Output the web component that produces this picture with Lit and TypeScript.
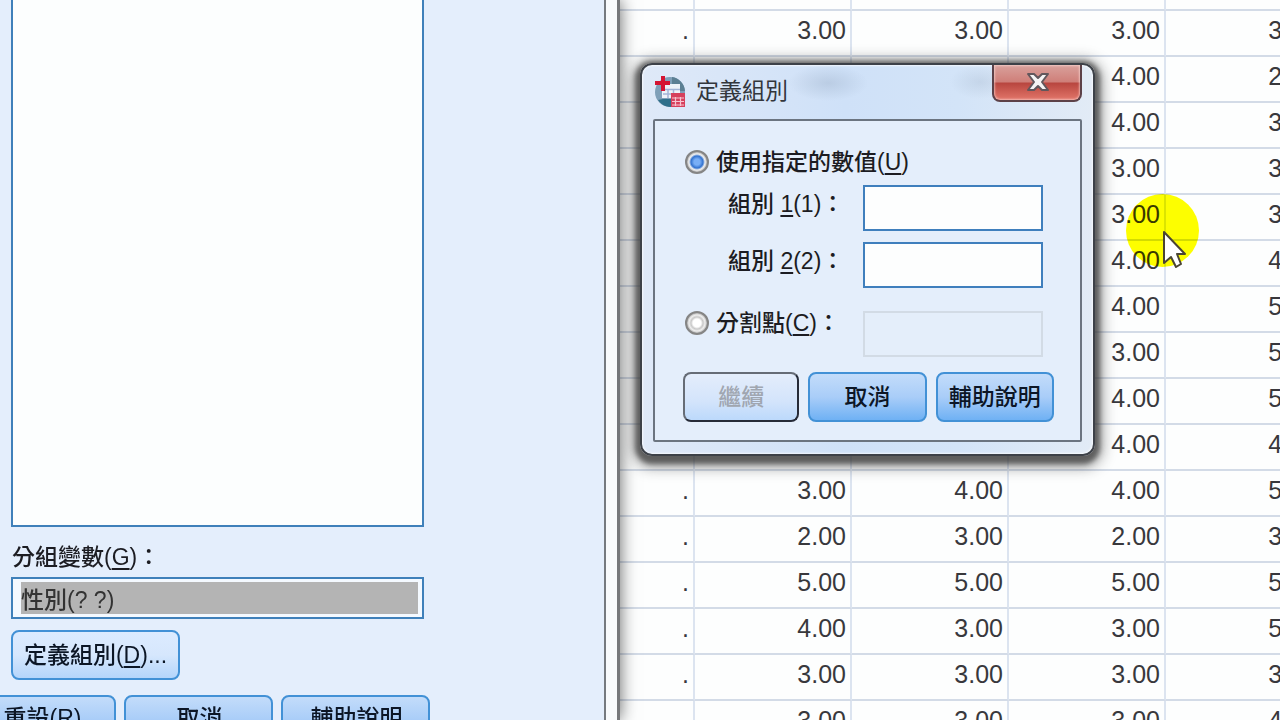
import { LitElement, html, css, svg } from "lit";
import { customElement, state } from "lit/decorators.js";

const ROWS: string[][] = [
  [".", "3.00", "3.00", "3.00", "3.00"],
  [".", "4.00", "3.00", "4.00", "2.00"],
  [".", "3.00", "4.00", "4.00", "3.00"],
  [".", "4.00", "3.00", "3.00", "3.00"],
  [".", "3.00", "3.00", "3.00", "3.00"],
  [".", "4.00", "4.00", "4.00", "4.00"],
  [".", "3.00", "4.00", "4.00", "5.00"],
  [".", "3.00", "3.00", "3.00", "5.00"],
  [".", "4.00", "4.00", "4.00", "5.00"],
  [".", "3.00", "3.00", "4.00", "4.00"],
  [".", "3.00", "4.00", "4.00", "5.00"],
  [".", "2.00", "3.00", "2.00", "3.00"],
  [".", "5.00", "5.00", "5.00", "5.00"],
  [".", "4.00", "3.00", "3.00", "5.00"],
  [".", "3.00", "3.00", "3.00", "3.00"],
  [".", "3.00", "3.00", "3.00", "4.00"],
];

const uiText = css`
  :host {
    font-family: "Liberation Sans", "Noto Sans CJK TC", sans-serif;
    font-size: 23px;
    font-weight: 500;
    line-height: 32px;
    color: #1c1c22;
  }
  * {
    box-sizing: border-box;
  }
  u {
    text-decoration-thickness: 2px;
    text-underline-offset: 3px;
    text-decoration-skip-ink: none;
  }
  button {
    font: inherit;
    color: #0c1626;
    height: 50px;
    padding: 0;
    white-space: nowrap;
    border: 2px solid #4291d6;
    border-radius: 8px;
    background: linear-gradient(#c3dcfa, #a9cdf8 50%, #6fb1f4);
  }
`;

@customElement("data-grid")
export class DataGrid extends LitElement {
  static styles = [
    uiText,
    css`
      :host {
        display: block;
        overflow: hidden;
        background: #fdfefe;
      }
      table {
        border-collapse: separate;
        border-spacing: 0;
        table-layout: fixed;
        width: 703px;
        font-size: 25px;
        font-weight: 400;
        color: #38383c;
      }
      .lead {
        width: 75px;
      }
      td {
        height: 46px;
        padding: 0 4px 6px 0;
        text-align: right;
        border-right: 2px solid #dce4f0;
        border-bottom: 2px solid #d3dbe7;
      }
      .gap td {
        height: 11px;
        padding: 0;
      }
    `,
  ];

  render() {
    return html`
      <table>
        <colgroup>
          <col class="lead" />
          <col span="4" />
        </colgroup>
        <tbody>
          <tr class="gap">
            ${[0, 1, 2, 3, 4].map(() => html`<td></td>`)}
          </tr>
          ${ROWS.map((r) => html`<tr>${r.map((c) => html`<td>${c}</td>`)}</tr>`)}
        </tbody>
      </table>
    `;
  }
}

@customElement("variable-panel")
export class VariablePanel extends LitElement {
  static styles = [
    uiText,
    css`
      :host {
        display: block;
        overflow: hidden;
        padding-left: 11px;
        background: #e4eefc;
        border-right: 2px solid #75797f;
      }
      .column {
        width: 413px;
      }
      .list {
        height: 527px;
        background: #fcfefe;
        border: 2px solid #3f80ba;
        border-top: 0;
      }
      .caption {
        display: block;
        padding: 14px 0 4px 1px;
      }
      .field {
        display: block;
        width: 100%;
        height: 42px;
        margin: 0;
        padding: 3px 4px 3px 8px;
        border: 2px solid #3f80ba;
        border-radius: 0;
        font: inherit;
        color: #333;
        background: linear-gradient(#b4b4b4, #b4b4b4) content-box, #f4f9ff;
      }
      .define {
        display: block;
        width: 169px;
        margin: 11px 0 15px;
        background: linear-gradient(#dcebff, #d6e7fd 50%, #b4d5fb);
      }
      .actions {
        display: flex;
        gap: 8px;
        margin-left: -44px;
      }
      .actions button {
        flex: 0 0 149px;
        padding: 0 0 4px 2px;
      }
    `,
  ];

  render() {
    return html`
      <div class="column">
        <div class="list" role="listbox" aria-label="檢定變數"></div>
        <label class="caption" for="group">分組變數(<u>G</u>)：</label>
        <input class="field" id="group" readonly .value=${"性別(? ?)"} />
        <button class="define">定義組別(<u>D</u>)...</button>
        <div class="actions">
          <button>重設(<u>R</u>)</button>
          <button>取消</button>
          <button>輔助說明</button>
        </div>
      </div>
    `;
  }
}

const appIcon = svg`
  <circle cx="16" cy="17" r="15" fill="#7f9fb8"/>
  <path d="M4 25A15 15 0 0 0 22 31V24H9Z" fill="#2f6f8a"/>
  <path d="M18 2A15 15 0 0 1 31 16H26V9H18Z" fill="#5c7f93"/>
  <path d="M8 9H26V23H8Z" fill="#eef2f8"/>
  <path d="M9 14.500H26M9 19H25M14 14V23M19.500 14V23" stroke="#a3b4d6" stroke-width="1.500"/>
  <path d="M7 1H11V6H16V10H11V16H7V10H1V6H7Z" fill="#d41432"/>
  <path d="M17 18H31V32H17Z" fill="#d6405c"/>
  <path d="M18 23H30M18 26.500H30M18 30H30M21.500 22V31M26.500 22V31" stroke="#f7c3d0" stroke-width="1.200"/>
`;

@customElement("define-groups")
export class DefineGroups extends LitElement {
  @state() private mode = "values";

  static styles = [
    uiText,
    css`
      :host {
        display: block;
        padding: 0 11px 12px;
        border: 2px solid #3d4148;
        border-radius: 12px;
        background: radial-gradient(closest-side, rgba(130, 150, 175, 0.28), transparent) 146px 0 / 80px 36px no-repeat,
          radial-gradient(closest-side, rgba(130, 150, 175, 0.2), transparent) 308px 0 / 60px 34px no-repeat,
          linear-gradient(90deg, #dfe9f8, #cfe1f8 45%, #d3e4f8 70%, #e2ebf6);
        box-shadow: inset 0 0 2px 1px rgba(255, 255, 255, 0.7),
          0 3px 5px 5px rgba(60, 60, 60, 0.7),
          0 4px 14px 8px rgba(40, 40, 40, 0.4);
      }
      header {
        display: flex;
        align-items: flex-start;
        height: 54px;
      }
      .icon {
        width: 32px;
        height: 33px;
        margin: 10px 10px 0 1px;
      }
      h1 {
        flex: 1;
        margin: 10px 0 0;
        font-size: 23px;
        font-weight: 400;
        line-height: 32px;
        color: #33363c;
      }
      .close {
        width: 90px;
        height: 37px;
        border: 2px solid #5c4148;
        border-top: 0;
        border-radius: 0 0 8px 8px;
        background: linear-gradient(#d9a19c, #cf7f79 48%, #b8463f 52%, #e2766a);
        box-shadow: inset 0 0 2px 1px rgba(255, 225, 220, 0.6);
      }
      .close svg {
        display: block;
        margin: 0 auto;
      }
      .body {
        padding: 25px 26px 18px 28px;
        border: 2px solid #6b7480;
        border-radius: 2px;
        background: #e4eefb;
      }
      .form {
        display: grid;
        grid-template-columns: 1fr 180px;
        align-items: start;
        padding: 0 11px 0 2px;
      }
      .choice {
        display: flex;
        align-items: center;
        gap: 7px;
      }
      .wide {
        grid-column: 1 / -1;
        margin-bottom: 7px;
      }
      .name {
        padding: 3px 0 0 43px;
      }
      .low {
        line-height: 24px;
      }
      input[type="radio"] {
        appearance: none;
        flex: none;
        width: 24px;
        height: 24px;
        margin: 0;
        border: 2px solid #858585;
        border-radius: 50%;
        background: radial-gradient(circle, #fff 4px, #c8c8c8 6px, #f0f0f0 8px, #b4b4b4 10px);
      }
      input[type="radio"]:checked {
        background: radial-gradient(circle, #78aef6 3px, #3272cf 6px, #f2f2f2 8px, #b4b4b4 10px);
      }
      .box {
        width: 100%;
        height: 46px;
        margin: 0 0 11px;
        padding: 0 6px;
        font: inherit;
        border: 2px solid #3f7fbd;
        border-radius: 0;
        background: #fdfefe;
      }
      .last {
        margin-bottom: 23px;
      }
      .box:disabled {
        margin: 0;
        border-color: #d2dbe5;
        background: #e4eefa;
      }
      .actions {
        display: grid;
        grid-template-columns: 116fr 118fr 118fr;
        gap: 9px;
        margin-top: 15px;
      }
      .actions button:disabled {
        color: #a0a6b0;
        border-color: #666c76 #262b38 #262b38 #666c76;
        background: linear-gradient(#e4edfb, #d3e4fb 60%, #bcd9fb);
      }
    `,
  ];

  render() {
    const pick = (m: string) => () => (this.mode = m);
    return html`
      <header>
        <svg class="icon" viewBox="0 0 32 33" aria-hidden="true">${appIcon}</svg>
        <h1>定義組別</h1>
        <button class="close" aria-label="關閉">
          <svg width="26" height="24" viewBox="0 0 26 24" aria-hidden="true">
            <path d="M4 3H10L14 7L18 3H24L18 11L24 19H18L14 15L10 19H4L10 11Z" fill="#f6f4f4" stroke="#62575c" stroke-width="2" stroke-linejoin="round" />
          </svg>
        </button>
      </header>
      <div class="body">
        <div class="form">
          <div class="choice wide">
            <input type="radio" name="mode" id="values" .checked=${this.mode === "values"} @change=${pick("values")} />
            <label for="values">使用指定的數值(<u>U</u>)</label>
          </div>
          <label class="name" for="g1">組別 <u>1</u>(1)：</label>
          <input class="box" id="g1" type="text" />
          <label class="name" for="g2">組別 <u>2</u>(2)：</label>
          <input class="box last" id="g2" type="text" />
          <div class="choice low">
            <input type="radio" name="mode" id="cut" .checked=${this.mode === "cut"} @change=${pick("cut")} />
            <label for="cut">分割點(<u>C</u>)：</label>
          </div>
          <input class="box" type="text" aria-label="分割點" ?disabled=${this.mode !== "cut"} />
        </div>
        <div class="actions">
          <button disabled>繼續</button>
          <button>取消</button>
          <button>輔助說明</button>
        </div>
      </div>
    `;
  }
}

@customElement("app-root")
export class AppRoot extends LitElement {
  static styles = css`
    :host {
      display: flex;
      position: relative;
      height: 100vh;
      overflow: hidden;
    }
    .window {
      box-sizing: border-box;
      display: flex;
      flex: 0 0 620px;
      z-index: 1;
      background: #f8fafc;
      border-right: 3px solid #75777a;
      box-shadow: 0 0 16px rgba(0, 0, 0, 0.6);
    }
    variable-panel {
      flex: 1;
      margin-right: 11px;
    }
    data-grid {
      flex: 1;
      min-width: 0;
    }
    define-groups {
      position: absolute;
      left: 640px;
      top: 63px;
      width: 455px;
      z-index: 2;
      box-sizing: border-box;
    }
    .halo {
      position: absolute;
      left: 1126px;
      top: 194px;
      width: 73px;
      height: 73px;
      border-radius: 50%;
      background: #ffff00;
      mix-blend-mode: multiply;
      z-index: 3;
    }
    .pointer {
      position: absolute;
      left: 1162px;
      top: 229px;
      z-index: 4;
    }
  `;

  render() {
    return html`
      <div class="window"><variable-panel></variable-panel></div>
      <data-grid></data-grid>
      <define-groups></define-groups>
      <div class="halo"></div>
      <svg class="pointer" width="28" height="42" viewBox="0 0 28 42" aria-hidden="true">
        <path d="M2 3V34L9 28L14 38L19 35L15 25H23Z" fill="#fff" stroke="#4b4533" stroke-width="2" stroke-linejoin="round" />
      </svg>
    `;
  }
}
